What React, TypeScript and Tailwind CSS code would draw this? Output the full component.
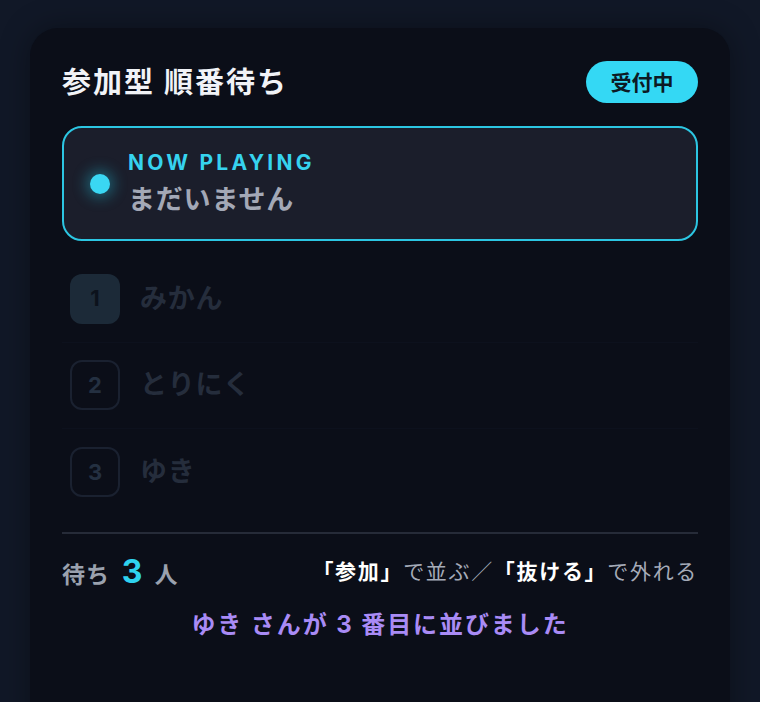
import React from "react";

const font = { fontFamily: '"Inter", "Noto Sans CJK JP", sans-serif' };

export default function App() {
  const rows = [
    { n: 1, name: "みかん", active: true },
    { n: 2, name: "とりにく", active: false },
    { n: 3, name: "ゆき", active: false },
  ];
  return (
    <div
      className="w-[760px] h-[702px] overflow-hidden bg-[#111827] pt-[28px] px-[30px]"
      style={font}
    >
      <div className="w-[700px] h-[720px] rounded-[28px] bg-[#0b0e18] shadow-[0_0_30px_rgba(0,0,0,0.35)] px-[32px] pt-[33px]">
        {/* header */}
        <div className="flex items-center justify-between h-[42px]">
          <div className="text-[29px] font-bold text-[#f1f3f7] tracking-[0.07em] leading-none">
            参加型 順番待ち
          </div>
          <div className="h-[42px] w-[112px] rounded-full bg-[#34d8f4] flex items-center justify-center text-[21px] font-bold text-[#0c1a24] leading-none">
            受付中
          </div>
        </div>

        {/* now playing */}
        <div className="mt-[23px] h-[115px] rounded-[20px] border-2 border-[#2cc6e2] bg-[#1b1e2b] flex items-center pl-[26px]">
          <div className="w-[20px] h-[20px] rounded-full bg-[#3ad7f3] shadow-[0_0_14px_4px_rgba(34,211,238,0.35)]" />
          <div className="ml-[18px] flex flex-col">
            <div className="text-[21px] font-bold text-[#36d3ef] tracking-[0.155em] leading-[24px]">
              NOW PLAYING
            </div>
            <div className="mt-[8px] text-[27px] font-bold text-[#a3a8b6] tracking-[0.03em] leading-[34px]">
              まだいません
            </div>
          </div>
        </div>

        {/* queue */}
        <div className="mt-[15px] flex flex-col">
          {rows.map((r) => (
            <div
              key={r.n}
              className="h-[86.5px] flex items-center pl-[8px] border-b border-[#0d111d] last:border-b-0"
            >
              {r.active ? (
                <div className="w-[50px] h-[50px] rounded-[12px] bg-[#1c2a38] flex items-center justify-center text-[22px] font-bold text-[#0c121c]">
                  {r.n}
                </div>
              ) : (
                <div className="w-[50px] h-[50px] rounded-[12px] border-2 border-[#1a2130] flex items-center justify-center text-[22px] font-bold text-[#243041]">
                  {r.n}
                </div>
              )}
              <div className="ml-[20px] text-[27px] font-bold text-[#252d3c] tracking-[0.03em]">
                {r.name}
              </div>
            </div>
          ))}
        </div>

        {/* divider */}
        <div className="mt-[16px] h-[2px] bg-[#262b38]" />

        {/* footer */}
        <div className="mt-[18px] flex items-center justify-between h-[40px]">
          <div className="flex items-baseline text-[#9aa1ae] text-[23px] font-bold">
            <span className="tracking-[0.04em]">待ち</span>
            <span className="mx-[12px] text-[32px] text-[#2fd2ef]">3</span>
            <span>人</span>
          </div>
          <div className="text-[21px] text-[#a5abb8] tracking-[0.08em]">
            <span className="font-bold text-white">「参加」</span>で並ぶ／
            <span className="font-bold text-white">「抜ける」</span>で外れる
          </div>
        </div>

        <div className="mt-[15px] text-center text-[24px] font-bold text-[#a98bf5] tracking-[0.08em]">
          ゆき さんが 3 番目に並びました
        </div>
      </div>
    </div>
  );
}
